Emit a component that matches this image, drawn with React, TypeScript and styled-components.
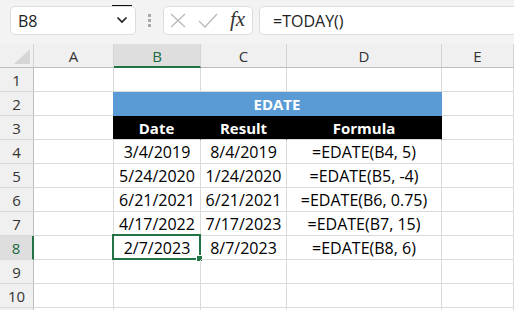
import React from 'react';
import styled, { createGlobalStyle } from 'styled-components';

const GlobalStyle = createGlobalStyle`
  html, body { margin: 0; padding: 0; background: #fff; overflow: hidden; }
  body { font-family: "Open Sans", "Noto Sans", sans-serif; }
`;

const Page = styled.div`
  width: 514px;
  height: 310px;
  overflow: hidden;
  display: flex;
  flex-direction: column;
`;

const Toolbar = styled.div`
  flex: none;
  height: 44px;
  box-sizing: border-box;
  background: #f3f3f3;
  display: flex;
  align-items: flex-start;
  padding: 6px 0 0 10px;
`;

const NameBox = styled.div`
  width: 126px;
  height: 29px;
  box-sizing: border-box;
  background: #fff;
  border: 1px solid #dcdcdc;
  border-radius: 5px;
  display: flex;
  align-items: center;
`;

const NameText = styled.span`
  flex: 1;
  padding-left: 7px;
  font-size: 16px;
  color: #222;
`;

const DropButton = styled.div`
  width: 20px;
  height: 29px;
  margin: -2px 3px 0 0;
  box-sizing: border-box;
  border-top: 1.5px solid #111;
  display: flex;
  align-items: center;
  justify-content: center;
`;

const Dots = styled.div`
  width: 27px;
  height: 29px;
  display: flex;
  flex-direction: column;
  align-items: center;
  justify-content: center;
  gap: 2px;
`;

const Dot = styled.span`
  width: 3px;
  height: 3px;
  background: #a8a8a8;
`;

const FxBox = styled.div`
  width: 90px;
  height: 29px;
  box-sizing: border-box;
  background: #fff;
  border: 1px solid #dcdcdc;
  border-radius: 5px;
  display: flex;
  align-items: center;
  padding-left: 6px;
  gap: 12px;
`;

const FxText = styled.span`
  font-family: "Liberation Serif", "DejaVu Serif", serif;
  font-style: italic;
  font-size: 21px;
  color: #333;
  line-height: 1;
  margin-top: -2px;
`;

const FormulaInput = styled.div`
  flex: 1;
  height: 29px;
  margin: 0 -10px 0 6px;
  box-sizing: border-box;
  background: #fff;
  border: 1px solid #dcdcdc;
  border-radius: 5px;
  display: flex;
  align-items: center;
  padding-left: 13px;
  font-size: 16px;
  color: #222;
`;

const Sheet = styled.div`
  display: grid;
  grid-template-columns: 34px 80px 87px 86px 155px 1fr;
  grid-auto-rows: 24px;
`;

const HeaderBase = styled.div`
  box-sizing: border-box;
  display: flex;
  align-items: center;
  justify-content: center;
  font-size: 15px;
`;

const Corner = styled(HeaderBase)`
  background: #f0f0f0;
  border-right: 1px solid #d4d4d4;
  border-bottom: 1px solid #bdbdbd;
  justify-content: flex-end;
  align-items: flex-end;
  padding: 0 3px 3px 0;
`;

const ColHeader = styled(HeaderBase)<{ $selected?: boolean }>`
  background: ${(p) => (p.$selected ? '#dedede' : '#f0f0f0')};
  color: ${(p) => (p.$selected ? '#1d6b40' : '#333')};
  border-right: 1px solid #d4d4d4;
  border-bottom: ${(p) => (p.$selected ? '2px solid #217346' : '1px solid #bdbdbd')};
  padding-top: 1px;
`;

const RowHeader = styled(HeaderBase)<{ $selected?: boolean }>`
  background: ${(p) => (p.$selected ? '#dedede' : '#f0f0f0')};
  color: ${(p) => (p.$selected ? '#1d6b40' : '#333')};
  border-right: ${(p) => (p.$selected ? '2px solid #217346' : '1px solid #bdbdbd')};
  border-bottom: 1px solid #dadada;
`;

const Cell = styled.div`
  position: relative;
  box-sizing: border-box;
  border-right: 1px solid #dadada;
  border-bottom: 1px solid #dadada;
  display: flex;
  align-items: center;
  justify-content: center;
  font-size: 16px;
  color: #000;
  white-space: nowrap;
  padding-top: 1px;
`;

const TitleCell = styled(Cell)`
  grid-column: span 3;
  margin-left: -1px;
  background: #5b9bd5;
  border-right-color: #5b9bd5;
  border-bottom-color: #5b9bd5;
  color: #fff;
  font-weight: 700;
  font-size: 15px;
`;

const HeadCell = styled(Cell)<{ $first?: boolean }>`
  margin-left: ${(p) => (p.$first ? '-1px' : '0')};
  background: #000;
  border-right-color: #000;
  color: #fff;
  font-weight: 700;
  font-size: 15px;
`;

const SelectedFrame = styled.div`
  position: absolute;
  left: -2px;
  top: -2px;
  right: -1px;
  bottom: -1px;
  border: 2px solid #217346;
  pointer-events: none;
`;

const FillHandle = styled.div`
  position: absolute;
  right: -4px;
  bottom: -4px;
  width: 5px;
  height: 5px;
  background: #217346;
  border: 1px solid #fff;
`;

const XIcon = () => (
  <svg width="16" height="15" viewBox="0 0 16 15">
    <path d="M1 1 L15 14 M15 1 L1 14" stroke="#b9b9b9" strokeWidth="1.3" fill="none" />
  </svg>
);

const CheckIcon = () => (
  <svg width="20" height="15" viewBox="0 0 20 15">
    <polyline points="1,8 7,14 19,1" stroke="#b9b9b9" strokeWidth="1.3" fill="none" />
  </svg>
);

const Chevron = () => (
  <svg width="12" height="8" viewBox="0 0 12 8">
    <polyline points="1.5,1.5 6,6 10.5,1.5" stroke="#222" strokeWidth="1.7" fill="none" />
  </svg>
);

const CornerTriangle = () => (
  <svg width="16" height="15" viewBox="0 0 16 15">
    <polygon points="16,0 16,15 0,15" fill="#d6d6d6" />
  </svg>
);

const columns = ['A', 'B', 'C', 'D', 'E'];

const data: Record<number, [string, string, string]> = {
  4: ['3/4/2019', '8/4/2019', '=EDATE(B4, 5)'],
  5: ['5/24/2020', '1/24/2020', '=EDATE(B5, -4)'],
  6: ['6/21/2021', '6/21/2021', '=EDATE(B6, 0.75)'],
  7: ['4/17/2022', '7/17/2023', '=EDATE(B7, 15)'],
  8: ['2/7/2023', '8/7/2023', '=EDATE(B8, 6)'],
};

// Row 11 is only a sliver at the bottom edge; its number is not visible.
const rows = Array.from({ length: 11 }, (_, i) => i + 1);

export default function App() {
  return (
    <Page>
      <GlobalStyle />
      <Toolbar>
        <NameBox>
          <NameText>B8</NameText>
          <DropButton>
            <Chevron />
          </DropButton>
        </NameBox>
        <Dots>
          <Dot />
          <Dot />
          <Dot />
        </Dots>
        <FxBox>
          <XIcon />
          <CheckIcon />
          <FxText>fx</FxText>
        </FxBox>
        <FormulaInput>=TODAY()</FormulaInput>
      </Toolbar>
      <Sheet>
        <Corner>
          <CornerTriangle />
        </Corner>
        {columns.map((c) => (
          <ColHeader key={c} $selected={c === 'B'}>
            {c}
          </ColHeader>
        ))}
        {rows.map((r) => {
          const row = data[r];
          return (
            <React.Fragment key={r}>
              <RowHeader $selected={r === 8}>{r <= 10 ? r : ''}</RowHeader>
              <Cell />
              {r === 2 ? (
                <TitleCell>EDATE</TitleCell>
              ) : r === 3 ? (
                <>
                  <HeadCell $first>Date</HeadCell>
                  <HeadCell>Result</HeadCell>
                  <HeadCell>Formula</HeadCell>
                </>
              ) : row ? (
                <>
                  <Cell>
                    {row[0]}
                    {r === 8 && (
                      <SelectedFrame>
                        <FillHandle />
                      </SelectedFrame>
                    )}
                  </Cell>
                  <Cell>{row[1]}</Cell>
                  <Cell>{row[2]}</Cell>
                </>
              ) : (
                <>
                  <Cell />
                  <Cell />
                  <Cell />
                </>
              )}
              <Cell />
            </React.Fragment>
          );
        })}
      </Sheet>
    </Page>
  );
}
